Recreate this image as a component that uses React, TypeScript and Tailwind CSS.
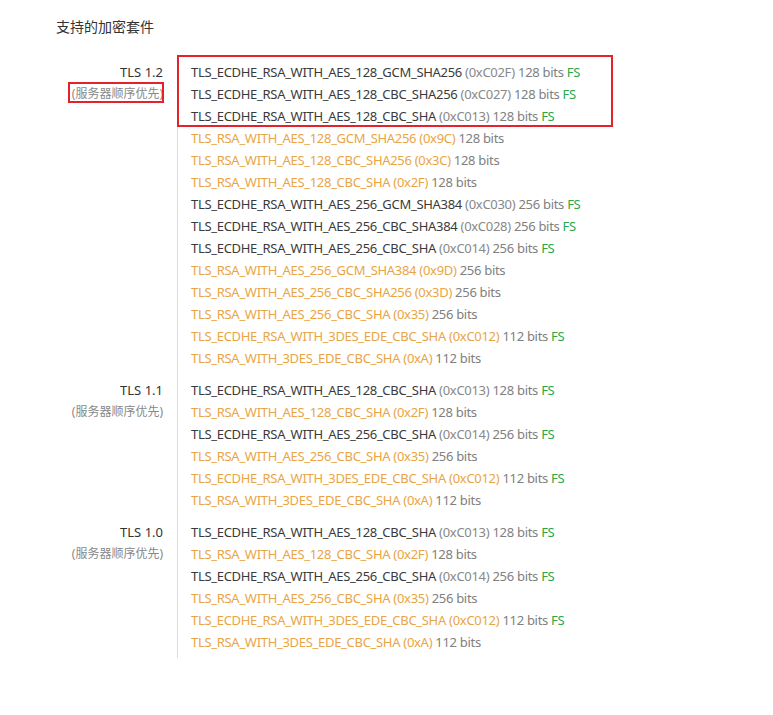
type Suite = { name: string; code: string; bits: number; weak?: boolean; fs?: boolean }

const tls12: Suite[] = [
  { name: "TLS_ECDHE_RSA_WITH_AES_128_GCM_SHA256", code: "0xC02F", bits: 128, fs: true },
  { name: "TLS_ECDHE_RSA_WITH_AES_128_CBC_SHA256", code: "0xC027", bits: 128, fs: true },
  { name: "TLS_ECDHE_RSA_WITH_AES_128_CBC_SHA", code: "0xC013", bits: 128, fs: true },
  { name: "TLS_RSA_WITH_AES_128_GCM_SHA256", code: "0x9C", bits: 128, weak: true },
  { name: "TLS_RSA_WITH_AES_128_CBC_SHA256", code: "0x3C", bits: 128, weak: true },
  { name: "TLS_RSA_WITH_AES_128_CBC_SHA", code: "0x2F", bits: 128, weak: true },
  { name: "TLS_ECDHE_RSA_WITH_AES_256_GCM_SHA384", code: "0xC030", bits: 256, fs: true },
  { name: "TLS_ECDHE_RSA_WITH_AES_256_CBC_SHA384", code: "0xC028", bits: 256, fs: true },
  { name: "TLS_ECDHE_RSA_WITH_AES_256_CBC_SHA", code: "0xC014", bits: 256, fs: true },
  { name: "TLS_RSA_WITH_AES_256_GCM_SHA384", code: "0x9D", bits: 256, weak: true },
  { name: "TLS_RSA_WITH_AES_256_CBC_SHA256", code: "0x3D", bits: 256, weak: true },
  { name: "TLS_RSA_WITH_AES_256_CBC_SHA", code: "0x35", bits: 256, weak: true },
  { name: "TLS_ECDHE_RSA_WITH_3DES_EDE_CBC_SHA", code: "0xC012", bits: 112, weak: true, fs: true },
  { name: "TLS_RSA_WITH_3DES_EDE_CBC_SHA", code: "0xA", bits: 112, weak: true },
]

const tls11: Suite[] = [
  { name: "TLS_ECDHE_RSA_WITH_AES_128_CBC_SHA", code: "0xC013", bits: 128, fs: true },
  { name: "TLS_RSA_WITH_AES_128_CBC_SHA", code: "0x2F", bits: 128, weak: true },
  { name: "TLS_ECDHE_RSA_WITH_AES_256_CBC_SHA", code: "0xC014", bits: 256, fs: true },
  { name: "TLS_RSA_WITH_AES_256_CBC_SHA", code: "0x35", bits: 256, weak: true },
  { name: "TLS_ECDHE_RSA_WITH_3DES_EDE_CBC_SHA", code: "0xC012", bits: 112, weak: true, fs: true },
  { name: "TLS_RSA_WITH_3DES_EDE_CBC_SHA", code: "0xA", bits: 112, weak: true },
]

const SuiteRow = ({ s }: { s: Suite }) => (
  <div className="h-[22px] leading-[22px] whitespace-nowrap">
    <span className={s.weak ? "text-[#e9a545]" : "text-[#3a3a3a]"}>{s.name} </span>
    <span className={s.weak ? "text-[#e9a545]" : "text-[#888]"}>({s.code})</span>
    <span className="text-[#808080]"> {s.bits} bits</span>
    {s.fs && <span className="text-[#2aa84a]"> FS</span>}
  </div>
)

const Group = ({ version, suites, listClass, highlight }: { version: string; suites: Suite[]; listClass: string; highlight?: boolean }) => (
  <div className="flex">
    {/* Label column */}
    <div className={`relative w-[163px] text-right ${listClass}`}>
      <div className="h-[22px] leading-[22px] text-[13px] text-[#333]">{version}</div>
      <div className="h-[22px] leading-[22px] text-[12px] text-[#888]">(服务器顺序优先)</div>
      {highlight && <div className="absolute left-[68px] top-[27px] w-[96px] h-[21px] border-2 border-[#e5222b]" />}
    </div>
    {/* Suites */}
    <div className={`relative ml-[14px] border-l border-[#dddddd] pl-[13px] text-[13px] tracking-[-0.3px] ${listClass}`}>
      {suites.map((s, i) => <SuiteRow key={i} s={s} />)}
      {highlight && <div className="absolute -left-px top-0 w-[436px] h-[72px] border-2 border-[#e5222b]" />}
    </div>
  </div>
)

export default function App() {
  return (
    <div className="min-h-screen bg-white font-['Noto_Sans','Noto_Sans_CJK_SC',sans-serif]">
      <h3 className="pl-[56px] pt-[17px] h-[37px] text-[14px] leading-[20px] text-[#333] font-normal">支持的加密套件</h3>
      <div className="mt-[18px] flex flex-col">
        <Group version="TLS 1.2" suites={tls12} listClass="pt-[6px] pb-[10px]" highlight />
        <Group version="TLS 1.1" suites={tls11} listClass="pb-[10px]" />
        <Group version="TLS 1.0" suites={tls11} listClass="pb-[5px]" />
      </div>
    </div>
  )
}
